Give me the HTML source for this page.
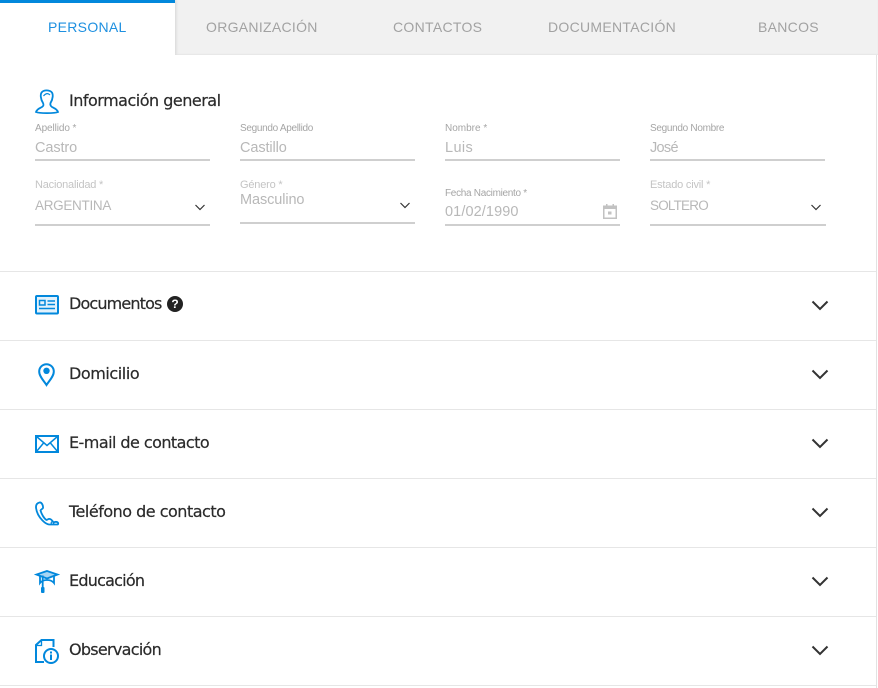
<!DOCTYPE html>
<html lang="es">
<head>
<meta charset="utf-8">
<title>Personal</title>
<style>
html,body{margin:0;padding:0;background:#fff}
body{width:878px;height:688px;position:relative;overflow:hidden;font-family:"Liberation Sans",sans-serif}
.a{position:absolute;white-space:nowrap}
#tabs{left:0;top:0;width:878px;height:55px;background:#f1f1f1;box-shadow:inset 0 -1px 1px #e6e6e6}
#active{left:0;top:0;width:175px;height:52px;background:#fff;border-top:3px solid #0288dc;box-shadow:1px 0 3px #d4d4d4;clip-path:inset(0 -5px 0 0)}
.tab{top:19px;font-size:14px;line-height:17px;color:#a2a2a2;letter-spacing:.3px;text-align:center}
.lab{font-size:10px;line-height:12px;color:#a5a5a5;letter-spacing:-.2px}
.lab2{font-size:11px;line-height:13px;color:#c4c4c4;letter-spacing:-.15px}
.val{font-size:14.5px;line-height:18px;color:#b8b8b8;letter-spacing:-.1px}
.cap{font-size:13.5px;letter-spacing:-.3px}
.ul{height:2px;background:#cfcfcf}
.sep{left:0;width:876px;height:1px;background:#e6e6e6}
.h{left:69px;font-size:16px;line-height:20px;color:#2b2b2b;font-family:"DejaVu Sans",sans-serif;-webkit-text-stroke:.2px #2b2b2b}
svg{position:absolute;overflow:visible}
</style>
</head>
<body>
<div class="a" id="tabs"></div>
<div class="a" id="active"></div>
<div class="a" style="left:876px;top:55px;width:1px;height:633px;background:#e2e2e2"></div>
<div class="a tab" style="left:48px;color:#1e90e0">PERSONAL</div>
<div class="a tab" style="left:206px">ORGANIZACIÓN</div>
<div class="a tab" style="left:393px">CONTACTOS</div>
<div class="a tab" style="left:548px">DOCUMENTACIÓN</div>
<div class="a tab" style="left:758px">BANCOS</div>

<svg style="left:35px;top:89px" width="24" height="25" viewBox="0 0 24 25" fill="none" stroke="#0288dc" stroke-width="1.800">
<path d="M8 14C5.500 10 5 5 7 3C9 .8 14 .8 16.500 3C18.500 5 18 10 15.500 14C15 16 15.500 17 17 18C19 19 22 20 23 23C20 24.500 4 24.500 1 23C2 20 5 19 7 18C8.500 17 9 16 8 14Z"/>
<path d="M8.500 7C11 4 13 4 15 6" stroke-width="1.200"/>
</svg>
<div class="a h" style="top:91px;letter-spacing:-.5px">Información general</div>

<div class="a lab" style="left:35px;top:123px;letter-spacing:-.1px">Apellido *</div>
<div class="a val" style="left:35px;top:139px">Castro</div>
<div class="a ul" style="left:35px;top:159px;width:175px"></div>
<div class="a lab" style="left:240px;top:123px;letter-spacing:-.3px">Segundo Apellido</div>
<div class="a val" style="left:240px;top:139px">Castillo</div>
<div class="a ul" style="left:240px;top:159px;width:175px"></div>
<div class="a lab" style="left:445px;top:123px;letter-spacing:0">Nombre *</div>
<div class="a val" style="left:445px;top:139px;letter-spacing:.4px">Luis</div>
<div class="a ul" style="left:445px;top:159px;width:175px"></div>
<div class="a lab" style="left:650px;top:123px;letter-spacing:-.3px">Segundo Nombre</div>
<div class="a val" style="left:650px;top:139px;letter-spacing:-.7px">José</div>
<div class="a ul" style="left:650px;top:159px;width:175px"></div>

<div class="a lab2" style="left:35px;top:179px;letter-spacing:-.2px">Nacionalidad *</div>
<div class="a val cap" style="left:35px;top:197px">ARGENTINA</div>
<div class="a ul" style="left:35px;top:224px;width:175px"></div>
<svg style="left:195px;top:204px" width="10" height="7" viewBox="0 0 10 7" fill="none" stroke="#333" stroke-width="1.200"><path d="M.5 1L5 5.500L9.500 1"/></svg>

<div class="a lab2" style="left:240px;top:179px;letter-spacing:-.2px">Género *</div>
<div class="a val" style="left:240px;top:191px;letter-spacing:-.1px">Masculino</div>
<div class="a ul" style="left:240px;top:222px;width:175px"></div>
<svg style="left:400px;top:202px" width="10" height="7" viewBox="0 0 10 7" fill="none" stroke="#333" stroke-width="1.200"><path d="M.5 1L5 5.500L9.500 1"/></svg>

<div class="a lab" style="left:445px;top:188px;letter-spacing:-.3px">Fecha Nacimiento *</div>
<div class="a val" style="left:445px;top:203px;letter-spacing:.1px">01/02/1990</div>
<div class="a ul" style="left:445px;top:224px;width:175px"></div>
<svg style="left:603px;top:204px" width="14" height="15" viewBox="0 0 14 15"><path fill="#c2c2c2" fill-rule="evenodd" d="M3 0H4.500V1.500H9.500V0H11V1.500H14V15H0V1.500H3ZM1.500 5V13.500H12.500V5Z"/><rect x="5" y="7.500" width="3.500" height="3" fill="#c2c2c2"/></svg>

<div class="a lab2" style="left:650px;top:179px;letter-spacing:-.2px">Estado civil *</div>
<div class="a val cap" style="left:650px;top:197px;letter-spacing:-.8px">SOLTERO</div>
<div class="a ul" style="left:650px;top:224px;width:176px"></div>
<svg style="left:811px;top:204px" width="10" height="7" viewBox="0 0 10 7" fill="none" stroke="#333" stroke-width="1.200"><path d="M.5 1L5 5.500L9.500 1"/></svg>

<div class="a sep" style="top:271px"></div>
<div class="a sep" style="top:340px"></div>
<div class="a sep" style="top:409px"></div>
<div class="a sep" style="top:478px"></div>
<div class="a sep" style="top:547px"></div>
<div class="a sep" style="top:616px"></div>
<div class="a sep" style="top:685px"></div>

<svg style="left:35px;top:295px" width="24" height="20" viewBox="0 0 24 20" fill="none" stroke="#0288dc" stroke-width="2">
<rect x="1" y="1" width="22" height="17.500" rx="1" fill="#e3f2fc"/>
<rect x="4.500" y="5.500" width="5.500" height="4.500" stroke-width="1.500"/>
<path d="M12.500 6H20M12.500 9.500H20M4 13.500H20" stroke-width="1.500"/>
</svg>
<div class="a h" style="top:294px;letter-spacing:-.85px">Documentos</div>
<div class="a" style="left:167px;top:296px;width:16px;height:16px;border-radius:50%;background:#222;color:#fff;font-size:12px;font-weight:bold;line-height:16px;text-align:center">?</div>

<svg style="left:38px;top:363px" width="17" height="24" viewBox="0 0 17 24" fill="none" stroke="#0288dc" stroke-width="2">
<path d="M8.500 22C6 18 1.200 13.500 1.200 8.500A7.300 7.300 0 0 1 15.800 8.500C15.800 13.500 11 18 8.500 22Z"/>
<circle cx="8.500" cy="7.800" r="3.200" fill="#0288dc" stroke="none"/>
</svg>
<div class="a h" style="top:364px;letter-spacing:-.43px">Domicilio</div>

<svg style="left:35px;top:435px" width="24" height="18" viewBox="0 0 24 18" fill="none" stroke="#0288dc" stroke-width="2">
<rect x="1" y="1" width="22" height="16"/>
<path d="M1.500 1.500L12 10.500L22.500 1.500M1.500 16.500L9 7.500M22.500 16.500L15 7.500" stroke-width="1.500"/>
</svg>
<div class="a h" style="top:433px;letter-spacing:-.55px">E-mail de contacto</div>

<svg style="left:35px;top:501px" width="24" height="25" viewBox="0 0 24 25" fill="none" stroke="#0288dc" stroke-width="1.800">
<path d="M4.500 1.500C2.500 2 .8 3.500 1 6.500C1.500 11.500 4 16 7.500 19.500C9.500 21.500 11.500 23.300 14 23.500H22.500C23.500 23.500 23.500 21.500 22 21C20.500 20.500 19.500 21 18.500 21.500C17 19 15 17.500 13.500 18C12.500 18.500 12 19 11.500 19C9 17.500 6.500 13 5.500 9.500C5.800 8.500 7.500 8 8 7C8.300 5 7 1 4.500 1.500Z"/>
<circle cx="17.500" cy="22" r="1.300" stroke-width="1.200"/>
</svg>
<div class="a h" style="top:502px;letter-spacing:-.5px">Teléfono de contacto</div>

<svg style="left:35px;top:570px" width="24" height="24" viewBox="0 0 24 24" fill="none" stroke="#0288dc" stroke-width="1.800">
<path d="M12 1L22.500 4.500L12 8.500L1.500 4.500Z" fill="#0288dc" fill-opacity=".35"/>
<path d="M5 6.500V13C7 10.500 9 10 12 10C15 10 17 10.500 19 13V6.500"/>
<path d="M7.700 5.500V17"/>
<rect x="6" y="17" width="3.500" height="6" rx="1" fill="#0288dc" stroke="none"/>
</svg>
<div class="a h" style="top:571px;letter-spacing:-.77px">Educación</div>

<svg style="left:35px;top:639px" width="24" height="25" viewBox="0 0 24 25" fill="none" stroke="#0288dc" stroke-width="2">
<path d="M9 23H1V6L6.500 1H18.500V8"/>
<path d="M1 6.500H6.500V1.500" stroke-width="1.300"/>
<circle cx="16" cy="17" r="7" fill="#fff"/>
<rect x="15" y="15.500" width="2" height="5.500" fill="#0288dc" stroke="none"/>
<rect x="15" y="12.500" width="2" height="2" fill="#0288dc" stroke="none"/>
</svg>
<div class="a h" style="top:640px;letter-spacing:-.72px">Observación</div>

<svg style="left:811px;top:300px" width="18" height="12" viewBox="0 0 18 12" fill="none" stroke="#333" stroke-width="2"><path d="M1.500 1.500L9 9L16.500 1.500"/></svg>
<svg style="left:811px;top:369px" width="18" height="12" viewBox="0 0 18 12" fill="none" stroke="#333" stroke-width="2"><path d="M1.500 1.500L9 9L16.500 1.500"/></svg>
<svg style="left:811px;top:438px" width="18" height="12" viewBox="0 0 18 12" fill="none" stroke="#333" stroke-width="2"><path d="M1.500 1.500L9 9L16.500 1.500"/></svg>
<svg style="left:811px;top:507px" width="18" height="12" viewBox="0 0 18 12" fill="none" stroke="#333" stroke-width="2"><path d="M1.500 1.500L9 9L16.500 1.500"/></svg>
<svg style="left:811px;top:576px" width="18" height="12" viewBox="0 0 18 12" fill="none" stroke="#333" stroke-width="2"><path d="M1.500 1.500L9 9L16.500 1.500"/></svg>
<svg style="left:811px;top:645px" width="18" height="12" viewBox="0 0 18 12" fill="none" stroke="#333" stroke-width="2"><path d="M1.500 1.500L9 9L16.500 1.500"/></svg>
</body>
</html>
